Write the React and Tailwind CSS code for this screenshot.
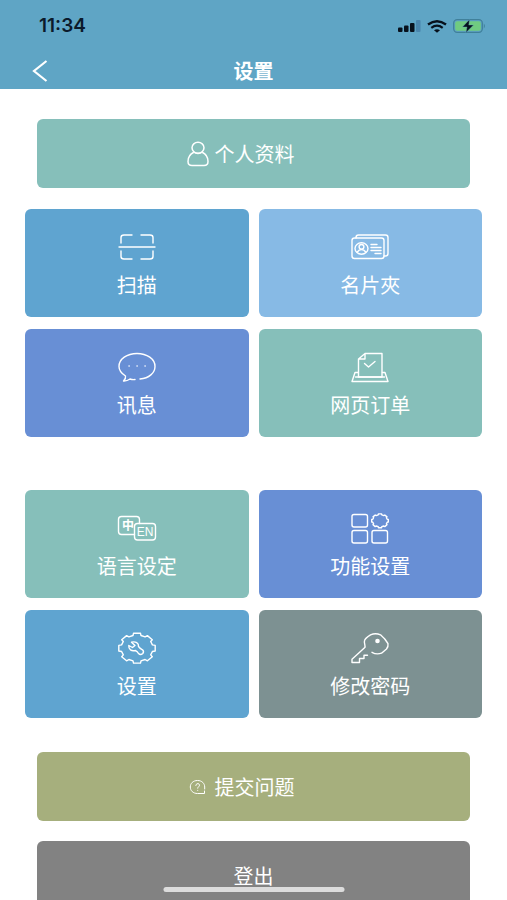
import clsx from 'clsx';

const gearPath = (cx, cy, rx, ry, teeth, depth) => {
  const step = (Math.PI * 2) / teeth;
  const offsets = [
    [-0.24, 1],
    [0.24, 1],
    [0.32, 1 - depth],
    [0.68, 1 - depth],
  ];
  const points = [];
  for (let i = 0; i < teeth; i++) {
    offsets.forEach(([offset, scale]) => {
      const angle = (i + offset) * step;
      const x = cx + Math.cos(angle) * rx * scale;
      const y = cy + Math.sin(angle) * ry * scale;
      points.push(`${x.toFixed(1)} ${y.toFixed(1)}`);
    });
  }
  return `M${points.join('L')}Z`;
};

function TileIcon({ children }) {
  return (
    <svg
      viewBox="0 0 40 32"
      className="h-8 w-10"
      fill="none"
      stroke="currentColor"
      strokeWidth="1.4"
      strokeLinecap="round"
      strokeLinejoin="round"
      aria-hidden="true"
    >
      {children}
    </svg>
  );
}

const ScanIcon = () => (
  <TileIcon>
    <path d="M4 12V6.5Q4 4 7 4H15M24 4H33Q36 4 36 6.5V12M4 20V25.5Q4 28 7 28H15M24 28H33Q36 28 36 25.5V20" />
    <path d="M2 16H38" />
  </TileIcon>
);

const CardsIcon = () => (
  <TileIcon>
    <rect x="2" y="7" width="32" height="20.5" rx="2.5" />
    <path d="M6 7V6.5Q6 4 8.5 4H35.5Q38 4 38 6.5V22.5Q38 25 35.5 25H34" />
    <ellipse cx="11.5" cy="17.5" rx="6.5" ry="5.7" />
    <ellipse cx="11.5" cy="15.8" rx="2.4" ry="2.3" />
    <path d="M7.3 21Q9 18.5 11.5 18.5T15.7 21M21 13.5H27M21 16.5H31M21 19.5H31M25 22.5H31" />
  </TileIcon>
);

const MessageIcon = () => (
  <TileIcon>
    <path d="M23 28C32 27.2 38 22 38 15.5C38 8 30 2.5 20 2.5S2 8 2 15.5C2 19.5 4.5 22.5 8.5 25C9 27 8 28.5 6.5 30Q10 30.2 13 28Q15.5 28.8 18 28.5" />
    <path d="M12 15h.2M20 15h.2M28 15h.2" />
  </TileIcon>
);

const OrderIcon = () => (
  <TileIcon>
    <path d="M8.5 26V8L15 2.5H32V26ZM8.5 8H15V2.5" />
    <path d="M14.5 12.5L18.5 16L25 10.5" />
    <path d="M8 21.5H5L2 30.5H38L35 21.5H32.5M5.5 26H34.5" />
  </TileIcon>
);

const LanguageIcon = () => (
  <TileIcon>
    <path d="M17.5 22.5H4.5Q1.5 22.5 1.5 19.5V7.5Q1.5 4.5 4.5 4.5H19.5Q22.5 4.5 22.5 7.5V11.5" />
    <rect x="17.5" y="11.5" width="21" height="16.5" rx="3" />
    <g fill="currentColor" stroke="none" textAnchor="middle">
      <text x="11" y="18" className="font-['Noto_Sans_CJK_SC',sans-serif] text-[12px] font-bold">
        中
      </text>
      <text x="28" y="24" className="font-['Liberation_Sans',sans-serif] text-[12px]">
        EN
      </text>
    </g>
  </TileIcon>
);

const FeaturesIcon = () => (
  <TileIcon>
    <rect x="2" y="2.5" width="15.5" height="12.5" rx="2" />
    <rect x="2" y="18.5" width="15.5" height="12.5" rx="2" />
    <rect x="22" y="18.5" width="15.5" height="12.5" rx="2" />
    <path d={gearPath(30, 8.8, 8.5, 7, 8, 0.13)} />
  </TileIcon>
);

const SettingsIcon = () => (
  <TileIcon>
    <path d={gearPath(20, 16.2, 18.5, 15.2, 8, 0.14)} />
    <path d="M14.5 10.2C18.5 9 22 11.2 21.5 14.5Q23 16.5 25.5 17.8Q27.3 19.5 25.8 21.5Q23.5 23.5 21.5 21.5Q20.5 19.5 18.3 18.5C14.5 19.5 11.5 17.5 11.8 13.5L15.5 15.5L18 13.5Z" />
  </TileIcon>
);

const KeyIcon = () => (
  <TileIcon>
    <path d="M17.5 23.3H14V26.5H9.5V30.5H2V27.3L14.8 15.6C15.8 13.8 13.8 11.2 14.5 8.7C15 6.5 18.5 4 20.5 2.8Q25.5 .8 30.5 2.8Q35.5 7 38 11.7Q38.5 14.5 36.5 17L31.5 21.2Q26.5 23 22 20.3" />
    <circle cx="27.5" cy="9" r="2.3" fill="currentColor" stroke="none" />
  </TileIcon>
);

const PersonIcon = () => (
  <svg
    viewBox="0 0 22 26"
    className="h-[26px] w-[22px]"
    fill="none"
    stroke="currentColor"
    strokeWidth="1.5"
    aria-hidden="true"
  >
    <ellipse cx="11" cy="6.8" rx="6" ry="5.5" />
    <path d="M6.8 11.2C3 13 1 16.5 1 20.5Q1 24.5 5 24.5H17Q21 24.5 21 20.5C21 16.5 19 13 15.2 11.2" />
    <path d="M6.8 11.2Q11 13.8 15.2 11.2" />
  </svg>
);

const QuestionIcon = () => (
  <svg
    viewBox="0 0 22 26"
    className="h-[26px] w-[22px]"
    fill="none"
    stroke="currentColor"
    strokeLinecap="round"
    strokeLinejoin="round"
    aria-hidden="true"
  >
    <path d="M17.5 17V19.5H10.5C6 19.5 3.3 16.5 3.3 13S6 6.5 10.5 6.5S17.7 9.5 17.7 13V15" />
    <path d="M8.8 11.5C8.8 9 12.5 9 12.5 11.2C12.5 12.7 10.7 12.7 10.7 14.2M10.7 16.3v.1" />
  </svg>
);

const mainTiles = [
  { label: '扫描', icon: ScanIcon, color: 'bg-[#5fa4d0]' },
  { label: '名片夾', icon: CardsIcon, color: 'bg-[#87bae5]' },
  { label: '讯息', icon: MessageIcon, color: 'bg-[#688fd5]' },
  { label: '网页订单', icon: OrderIcon, color: 'bg-[#86bfba]' },
];

const settingTiles = [
  { label: '语言设定', icon: LanguageIcon, color: 'bg-[#86bfba]' },
  { label: '功能设置', icon: FeaturesIcon, color: 'bg-[#688fd5]' },
  { label: '设置', icon: SettingsIcon, color: 'bg-[#5fa4d0]' },
  { label: '修改密码', icon: KeyIcon, color: 'bg-[#7d9192]' },
];

function TileGrid({ tiles }) {
  return (
    <div className="grid grid-cols-2 gap-x-[10px] gap-y-3">
      {tiles.map((tile) => (
        <button
          key={tile.label}
          type="button"
          className={clsx(
            'flex h-[108px] flex-col items-center justify-center gap-2 rounded-md pt-1',
            tile.color
          )}
        >
          <tile.icon />
          <span>{tile.label}</span>
        </button>
      ))}
    </div>
  );
}

function WideButton({ icon: Icon, color, children }) {
  return (
    <button
      type="button"
      className={clsx(
        'mx-3 flex h-[69px] shrink-0 items-center justify-center gap-[6px] rounded-md',
        Icon && 'pr-[26px]',
        color
      )}
    >
      {Icon && <Icon />}
      <span>{children}</span>
    </button>
  );
}

function StatusBar() {
  return (
    <div className="flex h-[52px] items-center justify-between pr-[21px] pl-[39px] text-[#0b1a2b]">
      <span className="font-['Inter',sans-serif] text-[19px] font-semibold">11:34</span>
      <div className="flex items-center gap-[6px]">
        {/* Signal */}
        <svg viewBox="0 0 23 12" className="h-3 w-[23px]" fill="#07111c" aria-hidden="true">
          <rect x="0" y="7.5" width="4.5" height="4.5" rx="1" />
          <rect x="6" y="5.5" width="4.5" height="6.5" rx="1" />
          <rect x="12" y="3" width="4.5" height="9" rx="1" />
          <rect x="18" y="0" width="4.5" height="12" rx="1" fill="#4a86ad" />
        </svg>
        {/* Wi-Fi */}
        <svg viewBox="0 0 20 13" className="h-[13px] w-5" fill="none" stroke="#07111c" aria-hidden="true">
          <path d="M1 4.5Q10 -2 19 4.5" strokeWidth="2.4" />
          <path d="M4.3 7.8Q10 3.5 15.7 7.8" strokeWidth="2.2" />
          <path d="M7 10.3Q10 8 13 10.3L10 12.8Z" fill="#07111c" stroke="none" />
        </svg>
        {/* Battery */}
        <svg viewBox="0 0 33 14" className="h-[14px] w-[33px]" aria-hidden="true">
          <rect x=".7" y=".7" width="28.6" height="12.6" rx="3.5" fill="none" stroke="#40809a" strokeWidth="1.3" />
          <rect x="2.2" y="2.2" width="25.6" height="9.6" rx="2" fill="#70cb80" />
          <path d="M30.8 4.5Q33 7 30.8 9.5Z" fill="#40809a" />
          <path d="M16.5 .5L9.5 8H14L13 13.5L20.5 6H15.8Z" fill="#07111c" stroke="#62a7c6" strokeWidth=".4" />
        </svg>
      </div>
    </div>
  );
}

export default function App() {
  return (
    <div className="relative flex h-screen flex-col overflow-hidden bg-white font-['Noto_Sans_CJK_SC',sans-serif] text-xl text-white">
      <header className="flex h-[89px] shrink-0 flex-col bg-[#5fa5c5]">
        <StatusBar />
        <div className="grid flex-1 grid-cols-[1fr_auto_1fr] items-center px-8">
          <button type="button" aria-label="返回" className="w-4">
            <svg
              viewBox="0 0 16 22"
              className="h-[22px] w-4"
              fill="none"
              stroke="currentColor"
              strokeWidth="2.2"
              aria-hidden="true"
            >
              <path d="M14.5 1L2 11L14.5 21" />
            </svg>
          </button>
          <h1 className="font-bold">设置</h1>
        </div>
      </header>

      <main className="flex flex-1 flex-col overflow-y-auto px-[25px] pt-[30px] [scrollbar-width:none]">
        <WideButton icon={PersonIcon} color="bg-[#86bfba]">
          个人资料
        </WideButton>
        <div className="mt-[21px] mb-[53px]">
          <TileGrid tiles={mainTiles} />
        </div>
        <TileGrid tiles={settingTiles} />
        <div className="mt-[34px] flex flex-col gap-5">
          <WideButton icon={QuestionIcon} color="bg-[#a6af7d]">
            提交问题
          </WideButton>
          <WideButton color="bg-[#828282]">登出</WideButton>
        </div>
      </main>

      {/* Home indicator */}
      <div className="absolute bottom-2 left-1/2 h-[5px] w-[181px] -translate-x-1/2 rounded-full bg-[#dcdcdc]" />
    </div>
  );
}
